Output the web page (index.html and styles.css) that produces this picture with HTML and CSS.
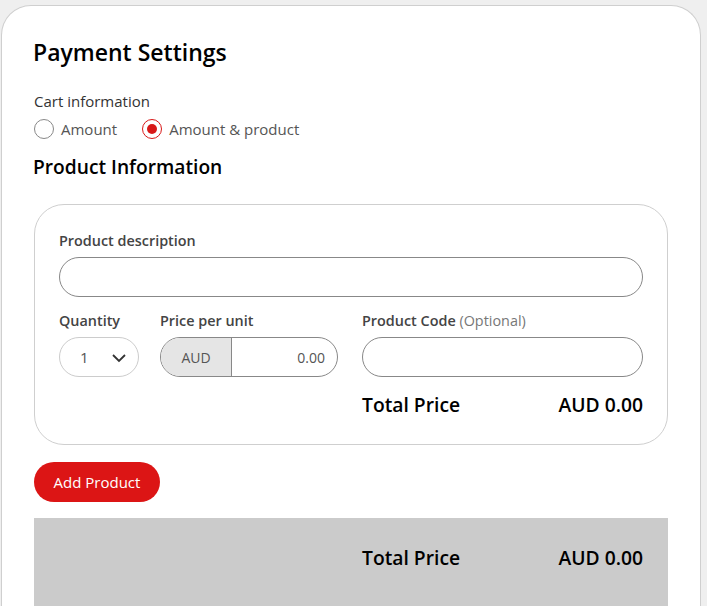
FILE: index.html
```html
<!DOCTYPE html>
<html>
<head>
<meta charset="utf-8">
<link rel="stylesheet" href="styles.css">
</head>
<body>
<div class="card">
  <h1 class="title">Payment Settings</h1>
  <div class="cart-label">Cart information</div>
  <div class="radios">
    <label class="radio"><span class="dot"></span>Amount</label>
    <label class="radio checked"><span class="dot"></span>Amount &amp; product</label>
  </div>
  <h2 class="subtitle">Product Information</h2>
  <div class="product-box">
    <div class="field">
      <div class="label">Product description</div>
      <div class="input"></div>
    </div>
    <div class="row">
      <div class="field qty">
        <div class="label">Quantity</div>
        <div class="select"><span class="val">1</span>
          <svg class="chev" width="16" height="10" viewBox="0 0 16 10"><path d="M2 2 L8 8 L14 2" fill="none" stroke="#333" stroke-width="1.8"/></svg>
        </div>
      </div>
      <div class="field price">
        <div class="label">Price per unit</div>
        <div class="group"><span class="cur">AUD</span><span class="amt">0.00</span></div>
      </div>
      <div class="field code">
        <div class="label">Product Code <span class="opt">(Optional)</span></div>
        <div class="input"></div>
        <div class="total"><span>Total Price</span><span>AUD 0.00</span></div>
      </div>
    </div>
  </div>
  <button class="add">Add Product</button>
  <div class="summary">
    <div class="total"><span>Total Price</span><span>AUD 0.00</span></div>
  </div>
</div>
</body>
</html>
```
FILE: styles.css
```css
html, body { margin: 0; padding: 0; }
body {
  background: #efefef;
  font-family: "Open Sans", "Noto Sans", sans-serif;
  color: #111;
  height: 606px;
  overflow: hidden;
}
.card {
  margin: 5px 6px 0 1px;
  background: #fff;
  border: 1px solid #cfcfcf;
  border-bottom: none;
  border-radius: 30px 30px 0 0;
  padding: 30px 32px 40px 31px;
}
.title {
  margin: 0;
  font-size: 23px;
  line-height: 32px;
  font-weight: 600;
  color: #000;
}
.cart-label {
  margin-top: 23px;
  font-size: 15px;
  line-height: 20px;
  color: #333;
  padding-left: 1px;
}
.radios {
  display: flex;
  gap: 25px;
  margin-top: 7px;
  height: 22px;
  align-items: center;
  padding-left: 1px;
}
.radio {
  display: flex;
  align-items: center;
  gap: 7px;
  font-size: 15px;
  color: #555;
}
.dot {
  width: 18px;
  height: 18px;
  border: 1px solid #888;
  border-radius: 50%;
  box-sizing: content-box;
  display: inline-block;
  position: relative;
}
.checked .dot { border-color: #d81818; }
.checked .dot::after {
  content: "";
  position: absolute;
  left: 4px; top: 4px;
  width: 10px; height: 10px;
  border-radius: 50%;
  background: #d81818;
}
.subtitle {
  margin: 13px 0 0 0;
  font-size: 19.2px;
  line-height: 28px;
  font-weight: 600;
  color: #000;
}
.product-box {
  margin-top: 23px;
  margin-left: 1px;
  border: 1px solid #cfcfcf;
  border-radius: 30px;
  padding: 26px 24px 26px 24px;
}
.label {
  font-size: 14.4px;
  line-height: 20px;
  height: 20px;
  font-weight: 600;
  color: #444;
  margin-bottom: 6px;
  white-space: nowrap;
}
.opt { font-weight: 400; color: #777; }
.input {
  height: 38px;
  border: 1px solid #888;
  border-radius: 20px;
}
.row {
  display: flex;
  margin-top: 14px;
}
.qty { width: 80px; margin-right: 21px; }
.price { width: 178px; margin-right: 24px; }
.code { flex: 1; }
.select {
  height: 38px;
  border: 1px solid #ccc;
  border-radius: 20px;
  display: flex;
  align-items: center;
  padding: 0 11px 0 20px;
  font-size: 15px;
  justify-content: space-between;
}
.select .val { color: #555; }
.chev { margin-top: 1px; }
.group {
  height: 38px;
  border: 1px solid #888;
  border-radius: 20px;
  display: flex;
  overflow: hidden;
  font-size: 14px;
}
.cur {
  width: 70px;
  background: #e5e5e5;
  border-right: 1px solid #888;
  display: flex;
  align-items: center;
  justify-content: center;
  color: #555;
}
.amt {
  flex: 1;
  display: flex;
  align-items: center;
  justify-content: flex-end;
  padding-right: 12px;
  color: #555;
}
.total {
  display: flex;
  justify-content: space-between;
  font-size: 19.3px;
  line-height: 26px;
  font-weight: 600;
  color: #000;
  margin-top: 15px;
}
.add {
  margin-top: 17px;
  margin-left: 1px;
  height: 40px;
  width: 126px;
  border: none;
  border-radius: 20px;
  background: #dc1515;
  color: #fff;
  font-family: "Open Sans", sans-serif;
  font-size: 15px;
  padding: 0;
  display: block;
}
.summary {
  margin-top: 16px;
  margin-left: 1px;
  background: #cbcbcb;
  height: 100px;
  padding: 0 25px 0 328px;
}
.summary .total { margin-top: 0; padding-top: 27px; }
```
